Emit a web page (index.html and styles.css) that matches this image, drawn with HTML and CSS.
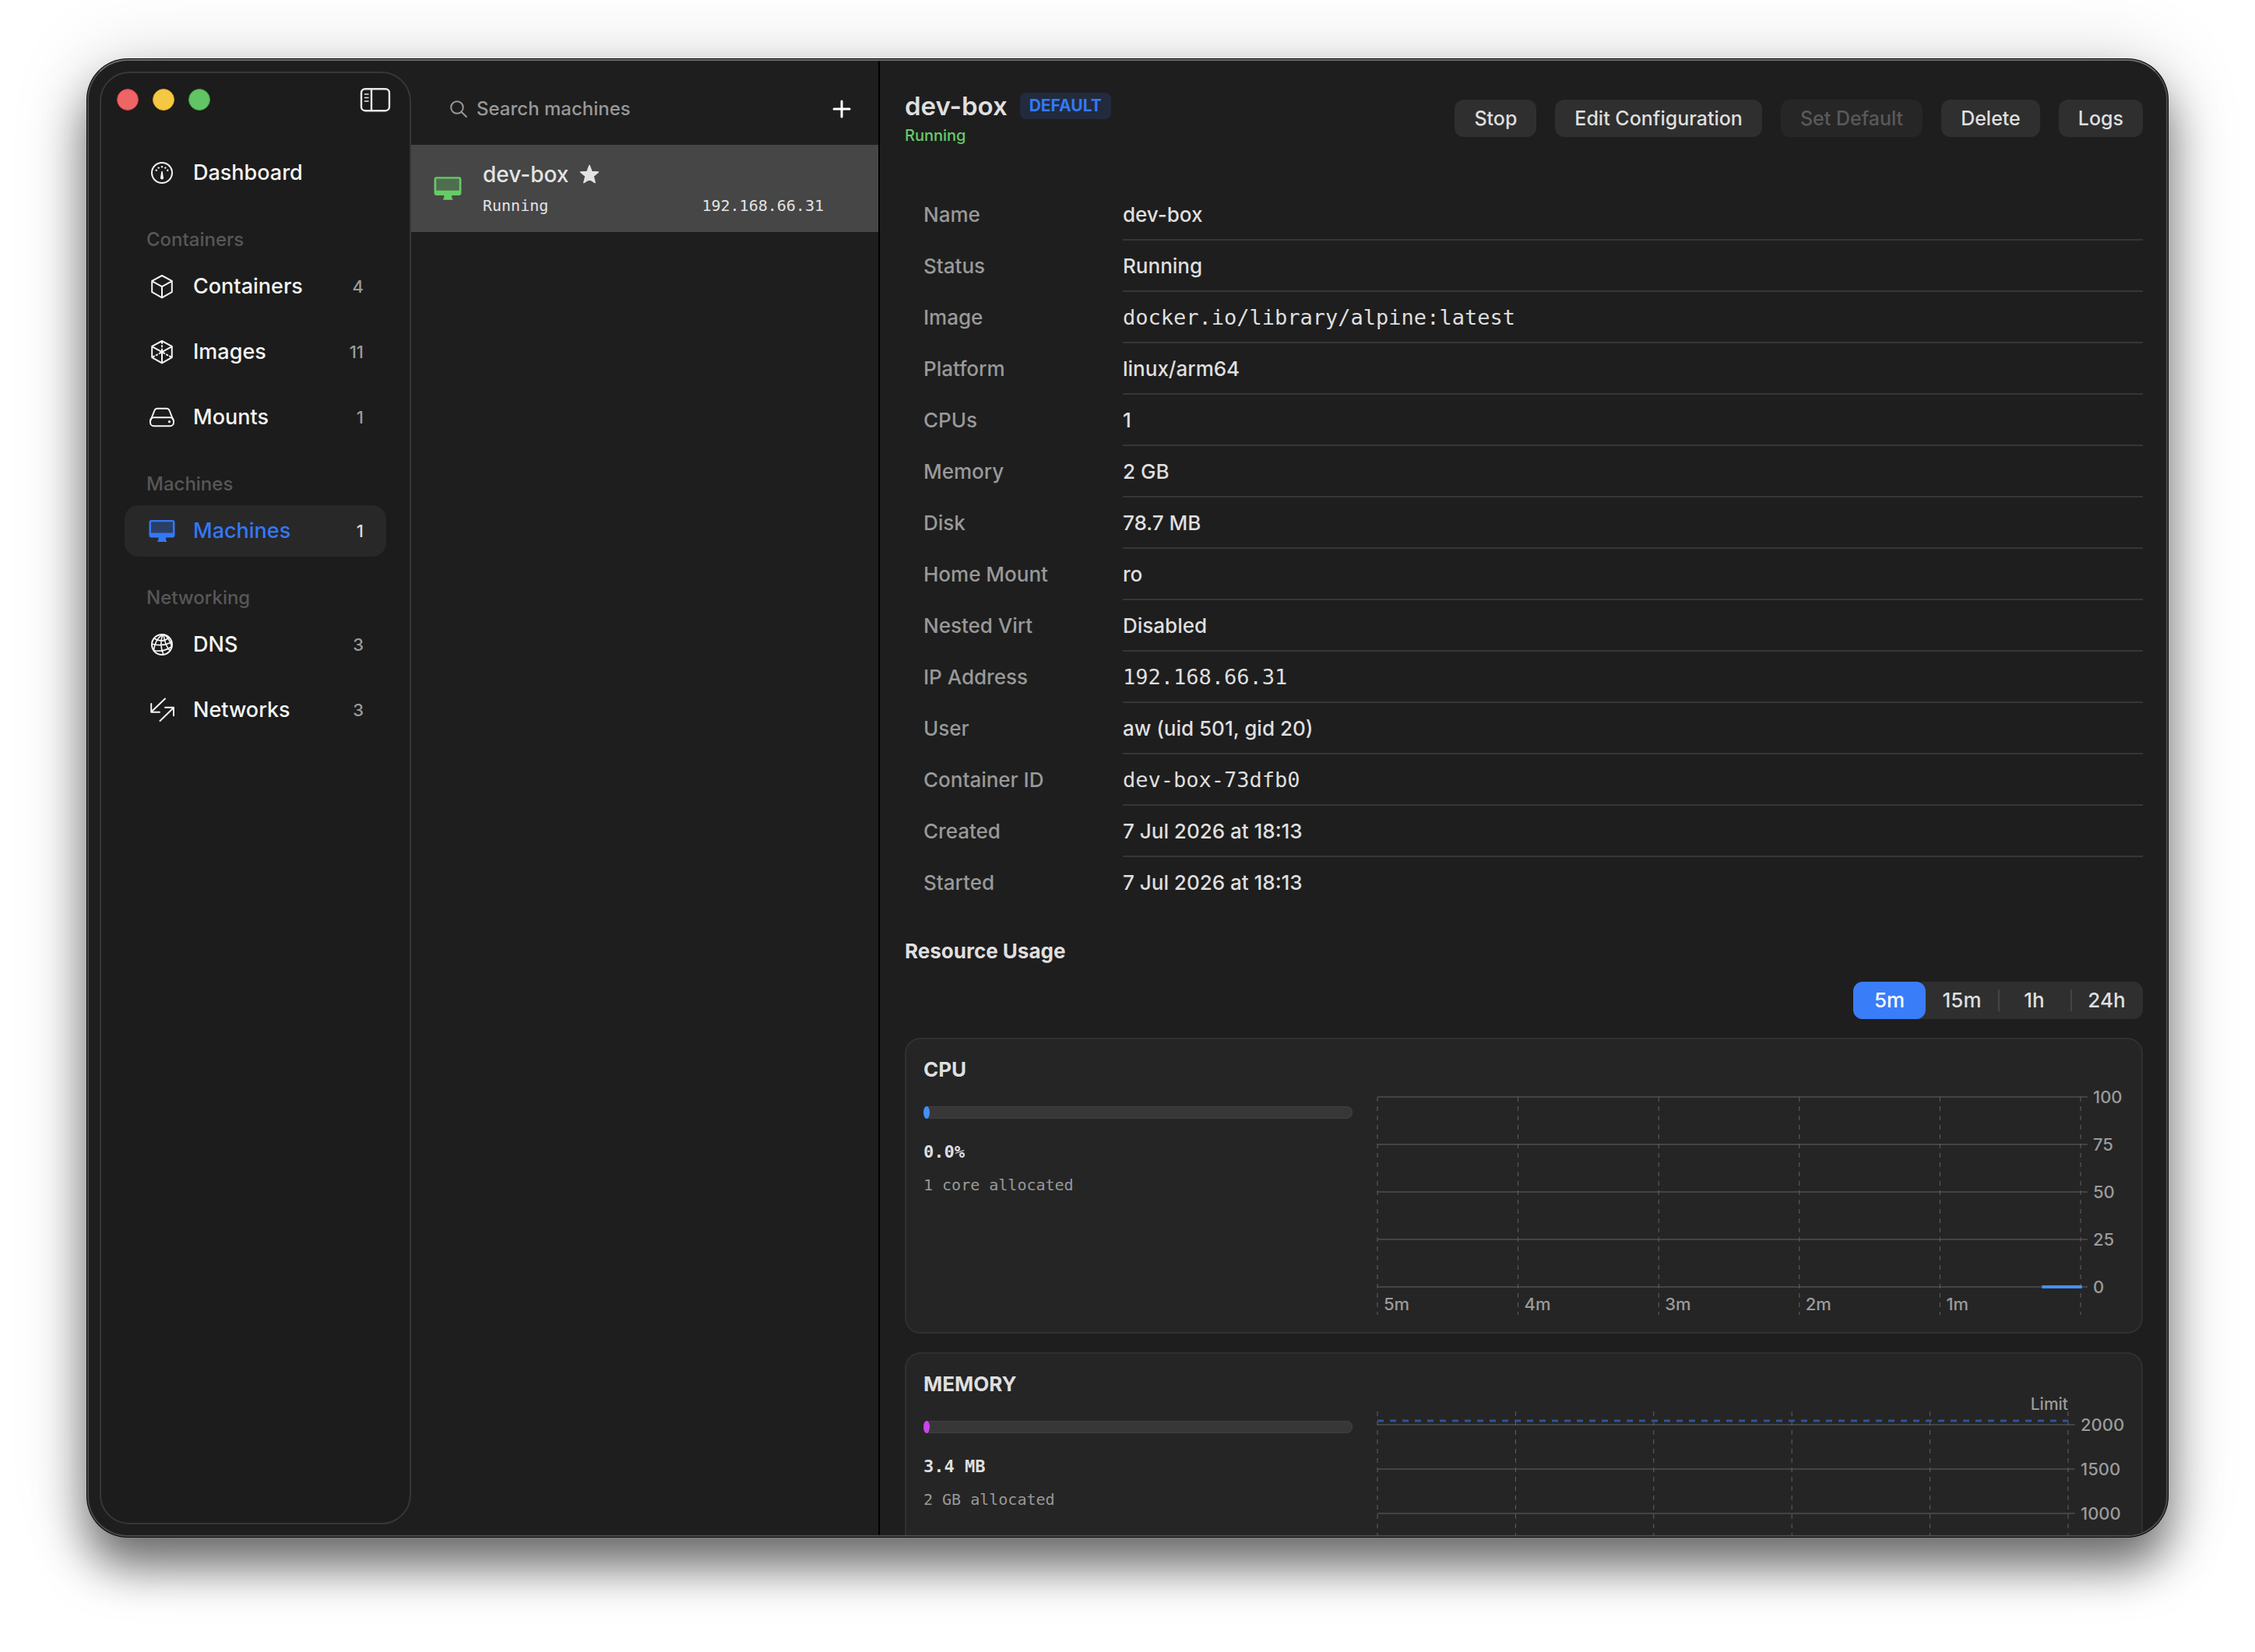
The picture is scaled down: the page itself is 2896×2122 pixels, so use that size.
FILE: index.html
```html
<!DOCTYPE html>
<html lang="en">
<head>
<meta charset="utf-8">
<title>Machines</title>
<link rel="stylesheet" href="styles.css">
</head>
<body>
<svg class="sprite" aria-hidden="true">
  <symbol id="display" viewBox="0 0 36 32">
    <rect x="2.5" y="3" width="31" height="19" rx="2" fill="currentColor" fill-opacity=".3"/>
    <path fill="currentColor" fill-rule="evenodd" d="M4.500 2H31.500A3 3 0 0 1 34.500 5V21.500A3 3 0 0 1 31.500 24.500H23V28H24V30H12.500V28H13.500V24.500H4.500A3 3 0 0 1 1.500 21.500V5A3 3 0 0 1 4.500 2ZM4 4.200V18.500H32V4.200Z"/>
  </symbol>
</svg>
<div class="window">
  <aside class="sidebar">
    <div class="titlebar">
      <span class="light light-close"></span>
      <span class="light light-minimise"></span>
      <span class="light light-zoom"></span>
      <button class="icon-button sidebar-toggle" type="button" aria-label="Toggle sidebar">
        <svg width="40" height="32" viewBox="0 0 40 32" fill="none" stroke="currentColor">
          <rect x="2" y="2.200" width="36" height="28" rx="5" stroke-width="2.400"/>
          <path d="M15 2v28" stroke-width="2.400"/>
          <path d="M6.500 9h4.500M6.500 13.500h4.500M6.500 18h4.500" stroke-width="1.600" stroke-linecap="round"/>
        </svg>
      </button>
    </div>
    <nav class="nav">
      <a class="nav-item" href="#dashboard">
        <svg class="nav-icon" viewBox="0 0 36 36" fill="none" stroke="currentColor">
          <circle cx="18" cy="18" r="13" stroke-width="2"/>
          <path d="M17.300 16h1.400l1.300 8.500a2 2 0 0 1-4 0z" fill="currentColor" stroke="none"/>
          <g fill="currentColor" stroke="none"><circle cx="10.800" cy="14.800" r="1.200"/><circle cx="13.700" cy="11.600" r="1.200"/><circle cx="18" cy="10.200" r="1.200"/><circle cx="22.300" cy="11.600" r="1.200"/><circle cx="25.200" cy="14.800" r="1.200"/></g>
        </svg>
        <span class="nav-label">Dashboard</span>
      </a>
      <h2 class="nav-heading">Containers</h2>
      <a class="nav-item" href="#containers">
        <svg class="nav-icon" viewBox="0 0 36 36" fill="none" stroke="currentColor" stroke-width="2" stroke-linejoin="round">
          <path d="M18 4l12.800 6.800v14.400L18 32.400 5.200 25.200V10.800zM5.200 11.200L18 18.200l12.800-7M18 18.200v14"/>
        </svg>
        <span class="nav-label">Containers</span><span class="nav-count">4</span>
      </a>
      <a class="nav-item" href="#images">
        <svg class="nav-icon" viewBox="0 0 36 36" fill="none" stroke="currentColor" stroke-width="2" stroke-linejoin="round">
          <path d="M18 4l12.800 6.800v14.400L18 32.400 5.200 25.200V10.800zM5.200 11.200L18 18.200l12.800-7M18 18.200v14"/>
          <path d="M18 18.200V4M18 18.200L5.200 25.200M18 18.200l12.800 7" stroke-dasharray="4.500 1.500 3 1.500"/>
        </svg>
        <span class="nav-label">Images</span><span class="nav-count">11</span>
      </a>
      <a class="nav-item" href="#mounts">
        <svg class="nav-icon" viewBox="0 0 36 36" fill="none" stroke="currentColor" stroke-width="2" stroke-linejoin="round">
          <path d="M3.200 22.500L8.300 9.500a4 4 0 0 1 3.700-2.700h12a4 4 0 0 1 3.700 2.700l5.100 13"/>
          <rect x="3" y="18.200" width="30" height="11" rx="4.500"/>
          <circle cx="27.500" cy="23.700" r="1.600" fill="currentColor" stroke="none"/>
        </svg>
        <span class="nav-label">Mounts</span><span class="nav-count">1</span>
      </a>
      <h2 class="nav-heading">Machines</h2>
      <a class="nav-item nav-item-selected" href="#machines" aria-current="page">
        <svg class="nav-icon"><use href="#display"/></svg>
        <span class="nav-label">Machines</span><span class="nav-count">1</span>
      </a>
      <h2 class="nav-heading">Networking</h2>
      <a class="nav-item" href="#dns">
        <svg class="nav-icon" viewBox="0 0 36 36" fill="none" stroke="currentColor" stroke-width="1.700">
          <circle cx="18" cy="18" r="13" stroke-width="2"/>
          <path d="M18.500 5C12 10 9 15 7.500 25M19 5c-3 8-3 17 1 26M20 5c1 8 3 15 8 20.500M20.500 5c5 3 8 8 10 15M8 10c6 4 13 4 19-1M5 17c8 2.500 17 2 25.500-2M7 25.500c8 1.500 17 0 23.500-5"/>
        </svg>
        <span class="nav-label">DNS</span><span class="nav-count">3</span>
      </a>
      <a class="nav-item" href="#networks">
        <svg class="nav-icon" viewBox="0 0 36 36" fill="none" stroke="currentColor" stroke-width="2" stroke-linecap="round" stroke-linejoin="round">
          <path d="M22 3.500L4.200 20.500M4.200 10v10.700H15M15.500 32L33 15M22 14.800h11v10.400"/>
        </svg>
        <span class="nav-label">Networks</span><span class="nav-count">3</span>
      </a>
    </nav>
  </aside>

  <section class="list">
    <div class="list-toolbar">
      <label class="search">
        <svg width="22" height="24" viewBox="0 0 22 24" fill="none" stroke="currentColor" stroke-width="2" stroke-linecap="round">
          <circle cx="9" cy="10" r="7.800"/><path d="M14.800 16L21 22"/>
        </svg>
        <input type="search" placeholder="Search machines" aria-label="Search machines">
      </label>
      <button class="icon-button" type="button" aria-label="Add machine">
        <svg width="24" height="24" viewBox="0 0 24 24" stroke="currentColor" stroke-width="3" stroke-linecap="round"><path d="M12 2v20M2 12h20"/></svg>
      </button>
    </div>
    <a class="machine" href="#dev-box">
      <svg class="machine-icon"><use href="#display"/></svg>
      <span class="machine-text">
        <span class="machine-name">dev-box
          <svg width="26" height="26" viewBox="0 0 26 26" fill="currentColor" stroke="currentColor" stroke-width="1.500" stroke-linejoin="round"><path d="M13 1.500l3.100 8 8.400.5-6.500 5.300 2.200 8.300L13 19l-7.200 4.600L8 15.300 1.500 10l8.400-.5z"/></svg>
        </span>
        <span class="machine-meta"><span>Running</span><span>192.168.66.31</span></span>
      </span>
    </a>
  </section>

  <main class="detail">
    <header class="detail-header">
      <div>
        <div class="title-row"><h1>dev-box</h1><span class="badge">DEFAULT</span></div>
        <p class="status">Running</p>
      </div>
      <div class="actions">
        <button class="button" type="button">Stop</button>
        <button class="button" type="button">Edit Configuration</button>
        <button class="button" type="button" disabled>Set Default</button>
        <button class="button" type="button">Delete</button>
        <button class="button" type="button">Logs</button>
      </div>
    </header>

    <table class="properties">
      <tbody>
        <tr><th scope="row">Name</th><td>dev-box</td></tr>
        <tr><th scope="row">Status</th><td>Running</td></tr>
        <tr><th scope="row">Image</th><td class="mono">docker.io/library/alpine:latest</td></tr>
        <tr><th scope="row">Platform</th><td>linux/arm64</td></tr>
        <tr><th scope="row">CPUs</th><td>1</td></tr>
        <tr><th scope="row">Memory</th><td>2 GB</td></tr>
        <tr><th scope="row">Disk</th><td>78.7 MB</td></tr>
        <tr><th scope="row">Home Mount</th><td>ro</td></tr>
        <tr><th scope="row">Nested Virt</th><td>Disabled</td></tr>
        <tr><th scope="row">IP Address</th><td class="mono">192.168.66.31</td></tr>
        <tr><th scope="row">User</th><td>aw (uid 501, gid 20)</td></tr>
        <tr><th scope="row">Container ID</th><td class="mono">dev-box-73dfb0</td></tr>
        <tr><th scope="row">Created</th><td>7 Jul 2026 at 18:13</td></tr>
        <tr><th scope="row">Started</th><td>7 Jul 2026 at 18:13</td></tr>
      </tbody>
    </table>

    <h2 class="section-title">Resource Usage</h2>
    <div class="segmented" role="radiogroup" aria-label="Time range">
      <label><input type="radio" name="range" checked><span>5m</span></label>
      <label><input type="radio" name="range"><span>15m</span></label>
      <label><input type="radio" name="range"><span>1h</span></label>
      <label><input type="radio" name="range"><span>24h</span></label>
    </div>

    <section class="card">
      <h3>CPU</h3>
      <div class="card-body">
        <div class="usage">
          <div class="meter"><div class="meter-fill meter-cpu"></div></div>
          <p class="usage-value">0.0%</p>
          <p class="usage-note">1 core allocated</p>
        </div>
        <div class="chart chart-cpu">
          <div class="plot">
            <svg class="grid" height="280">
              <g class="rule"><line x1="0" x2="101%" y1="0" y2="0"/><line x1="0" x2="101%" y1="61" y2="61"/><line x1="0" x2="101%" y1="122" y2="122"/><line x1="0" x2="101%" y1="183" y2="183"/><line x1="0" x2="101%" y1="244" y2="244"/></g>
              <g class="tick"><line x1="0" x2="0" y2="280"/><line x1="20%" x2="20%" y2="280"/><line x1="40%" x2="40%" y2="280"/><line x1="60%" x2="60%" y2="280"/><line x1="80%" x2="80%" y2="280"/><line x1="100%" x2="100%" y2="280"/></g>
              <line class="series-cpu" x1="94.500%" x2="100.200%" y1="244" y2="244"/>
            </svg>
            <div class="x-labels"><span>5m</span><span>4m</span><span>3m</span><span>2m</span><span>1m</span></div>
          </div>
          <div class="y-labels"><span>100</span><span>75</span><span>50</span><span>25</span><span>0</span></div>
        </div>
      </div>
    </section>

    <section class="card">
      <h3>MEMORY</h3>
      <div class="card-body">
        <div class="usage">
          <div class="meter"><div class="meter-fill meter-memory"></div></div>
          <p class="usage-value">3.4 MB</p>
          <p class="usage-note">2 GB allocated</p>
        </div>
        <div class="chart chart-memory">
          <div class="plot">
            <svg class="grid" height="276">
              <g class="rule"><line x1="0" x2="101%" y1="17" y2="17"/><line x1="0" x2="101%" y1="74" y2="74"/><line x1="0" x2="101%" y1="131" y2="131"/><line x1="0" x2="101%" y1="188" y2="188"/></g>
              <g class="tick"><line x1="0" x2="0" y2="276"/><line x1="20%" x2="20%" y2="276"/><line x1="40%" x2="40%" y2="276"/><line x1="60%" x2="60%" y2="276"/><line x1="80%" x2="80%" y2="276"/><line x1="100%" x2="100%" y2="276"/></g>
              <line class="limit" x1="0" x2="100%" y1="12" y2="12"/>
              <text class="limit-label" x="100%" y="-2" text-anchor="end">Limit</text>
            </svg>
          </div>
          <div class="y-labels"><span>2000</span><span>1500</span><span>1000</span></div>
        </div>
      </div>
    </section>
  </main>
</div>
</body>
</html>
```
FILE: styles.css
```css
* {
  box-sizing: border-box;
}

body {
  margin: 0;
  height: 100vh;
  padding: 76px 112px 148px;
  display: flex;
  background: #fff;
  color: #dfdfdf;
  font: 500 26px/32px Inter, "Liberation Sans", sans-serif;
}

h1, h2, h3, p {
  margin: 0;
}

a {
  color: inherit;
  text-decoration: none;
}

button, input {
  font: inherit;
  color: inherit;
  border: 0;
  margin: 0;
}

.sprite {
  display: none;
}

.window {
  flex: 1;
  min-width: 0;
  display: flex;
  overflow: hidden;
  background: #1e1e1e;
  border: 2px solid #4b4b4b;
  border-top-color: #6b6d6b;
  border-radius: 52px;
  box-shadow: 0 0 0 1px #000, 0 38px 60px rgba(0, 0, 0, .55), 0 0 100px rgba(0, 0, 0, .15);
}

/* Sidebar */

.sidebar {
  flex: none;
  width: 400px;
  margin: 14px 0 14px 14px;
  background: #1c1c1c;
  border: 2px solid #373737;
  border-radius: 38px;
}

.titlebar {
  height: 68px;
  padding: 0 24px 0 20px;
  display: flex;
  align-items: center;
  gap: 18px;
}

.light {
  width: 28px;
  height: 28px;
  border-radius: 50%;
  border: 1px solid;
}

.light-close {
  background: #ee6566;
  border-color: #d93a3a;
}

.light-minimise {
  background: #f4c843;
  border-color: #dba520;
}

.light-zoom {
  background: #63c466;
  border-color: #35a33b;
}

.icon-button {
  display: flex;
  padding: 0;
  background: none;
  color: #fff;
}

.sidebar-toggle {
  margin-left: auto;
  color: #e8e8e8;
}

.nav {
  padding: 27px 30px 0;
}

.nav-item {
  height: 66px;
  padding: 0 29px 0 30px;
  display: flex;
  align-items: center;
  gap: 22px;
  border-radius: 18px;
  color: #f4f4f4;
  font-size: 27px;
}

.nav-item + .nav-item {
  margin-top: 18px;
}

.nav-icon {
  flex: none;
  width: 36px;
  height: 36px;
}

.nav-count {
  margin-left: auto;
  color: #9b9b9b;
  font-size: 22px;
}

.nav-heading {
  margin: 37px 0 11px;
  padding-left: 28px;
  color: #575757;
  font-size: 24px;
  font-weight: 500;
}

.nav-item-selected {
  background: #282828;
  color: #3478f6;
}

.nav-item-selected .nav-count {
  color: #dcdcdc;
}

/* Machine list */

.list {
  flex: none;
  width: 602px;
  border-right: 2px solid #000;
}

.list-toolbar {
  height: 108px;
  padding: 15px 35px 0 50px;
  display: flex;
  align-items: center;
}

.search {
  flex: 1;
  display: flex;
  align-items: center;
  gap: 12px;
  color: #989898;
}

.search input {
  flex: 1;
  min-width: 0;
  padding: 0;
  background: none;
  outline: 0;
  font-size: 24px;
}

.search input::placeholder {
  color: #989898;
}

.machine {
  padding: 20px 70px 20px 28px;
  display: flex;
  align-items: center;
  gap: 26px;
  background: #464646;
  color: #e3e3e3;
}

.machine-icon {
  flex: none;
  width: 38px;
  height: 36px;
  color: #67cb66;
}

.machine-text {
  flex: 1;
  display: grid;
  gap: 8px;
}

.machine-name {
  display: flex;
  align-items: center;
  gap: 14px;
  font-size: 28px;
  line-height: 36px;
}

.machine-meta {
  display: flex;
  justify-content: space-between;
  font: 20px/28px "DejaVu Sans Mono", monospace;
}

/* Detail pane */

.detail {
  flex: 1;
  min-width: 0;
  padding: 36px 30px 0 32px;
  overflow: hidden;
}

.detail-header {
  margin-bottom: 53px;
  display: flex;
  align-items: center;
  justify-content: space-between;
}

.title-row {
  display: flex;
  align-items: center;
  gap: 16px;
}

h1 {
  font-size: 33px;
  line-height: 44px;
  font-weight: 600;
}

.badge {
  padding: 0 12px;
  border-radius: 8px;
  background: #212b3d;
  color: #3478f6;
  font-size: 21px;
  line-height: 34px;
  font-weight: 700;
}

.status {
  color: #67cb66;
  font-size: 20px;
}

.actions {
  display: flex;
  gap: 24px;
}

.button {
  height: 48px;
  padding: 0 25px;
  border-radius: 12px;
  background: #2f2f2f;
  font-size: 25px;
}

.button:disabled {
  background: #262626;
  color: #595959;
}

.properties {
  width: 100%;
  border-collapse: separate;
  border-spacing: 0;
}

.properties th {
  width: 280px;
  padding: 0 0 0 24px;
  color: #999;
  font-weight: 500;
  text-align: left;
}

.properties td {
  height: 66px;
  padding: 2px 0 0;
  border-bottom: 2px solid #363636;
}

.properties tr:last-child td {
  border-bottom-color: transparent;
}

.properties .mono {
  font-family: "DejaVu Sans Mono", monospace;
  font-size: 27px;
}

.section-title {
  margin: 39px 0 23px;
  font-size: 26px;
  font-weight: 700;
}

.segmented {
  width: 372px;
  margin: 0 0 24px auto;
  display: grid;
  grid-template-columns: repeat(4, 1fr);
  border-radius: 12px;
  background: #2f2f2f;
  text-align: center;
  line-height: 48px;
}

.segmented label {
  position: relative;
}

.segmented input {
  position: absolute;
  opacity: 0;
}

.segmented span {
  display: block;
  border-radius: 12px;
}

.segmented input:checked + span {
  background: #3a7df8;
  color: #fff;
}

.segmented label:nth-child(n + 3) {
  background: linear-gradient(#454545, #454545) left center / 2px 28px no-repeat;
}

/* Usage cards */

.card {
  height: 380px;
  margin-bottom: 24px;
  padding: 23px 22px;
  border: 2px solid #303030;
  border-radius: 20px;
  background: #252525;
}

.card h3 {
  font-size: 26px;
  font-weight: 700;
}

.card-body {
  margin-top: 7px;
  display: grid;
  grid-template-columns: minmax(0, 551fr) minmax(0, 959fr);
  gap: 32px;
}

.usage {
  padding-top: 24px;
  font-family: "DejaVu Sans Mono", monospace;
}

.meter {
  height: 16px;
  border-radius: 8px;
  background: #373737;
  box-shadow: inset 0 0 0 1px #3f3f3f;
}

.meter-fill {
  width: 8px;
  height: 16px;
  border-radius: 50%;
}

.meter-cpu {
  background: #4390f7;
}

.meter-memory {
  background: #c945e8;
}

.usage-value {
  margin-top: 27px;
  font-size: 22px;
  font-weight: 700;
}

.usage-note {
  margin-top: 10px;
  color: #999;
  font-size: 20px;
  font-weight: 400;
}

.chart {
  display: grid;
  color: #9b9b9b;
  font-size: 22px;
  line-height: 24px;
}

.chart-cpu {
  grid-template-columns: minmax(0, 1fr) 56px;
}

.chart-memory {
  grid-template-columns: minmax(0, 1fr) 72px;
}

.plot {
  padding-top: 12px;
}

.grid {
  display: block;
  width: 100%;
  overflow: visible;
}

.rule {
  stroke: #444;
  stroke-width: 2;
}

.tick {
  stroke: #626262;
  stroke-width: 1;
  stroke-dasharray: 6 6;
}

.series-cpu {
  stroke: #4390f7;
  stroke-width: 4;
}

.limit {
  stroke: #2a559f;
  stroke-width: 3;
  stroke-dasharray: 8 8;
}

.limit-label {
  fill: #9b9b9b;
  font-size: 21px;
}

.x-labels {
  display: grid;
  grid-template-columns: repeat(5, 1fr);
  margin-top: -26px;
}

.x-labels span {
  padding-left: 8px;
}

.y-labels {
  padding-left: 16px;
  display: grid;
  align-content: start;
  gap: 37px;
}

.chart-memory .y-labels {
  padding-top: 17px;
  gap: 33px;
}
```
